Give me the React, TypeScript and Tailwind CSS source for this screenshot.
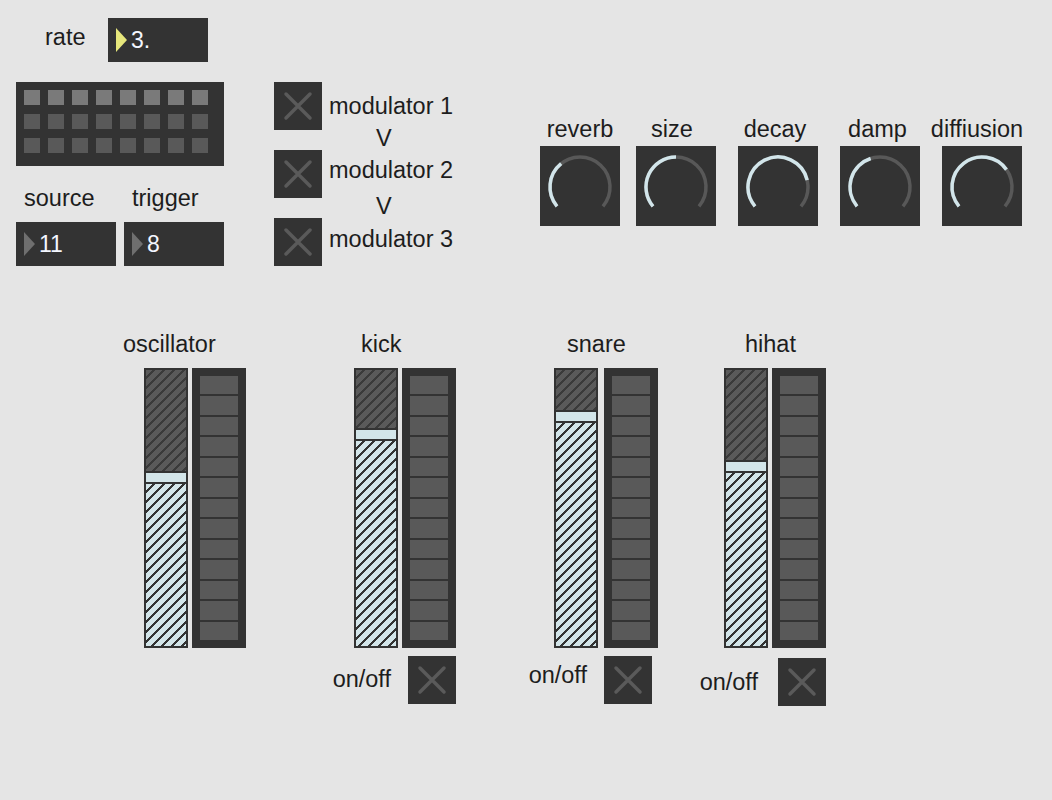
import React from "react";

const ARC_START = -130;
const ARC_END = 130;

const polar = (deg: number) => {
  const rad = (deg * Math.PI) / 180;
  return [40 + 30 * Math.sin(rad), 41 - 30 * Math.cos(rad)];
};

const arcPath = (from: number, to: number) => {
  const [x1, y1] = polar(from);
  const [x2, y2] = polar(to);
  const large = to - from > 180 ? 1 : 0;
  return `M ${x1} ${y1} A 30 30 0 ${large} 1 ${x2} ${y2}`;
};

type DialProps = { label: string; value: number; labelClass?: string; className?: string };

const Dial = ({ label, value, labelClass = "", className = "" }: DialProps) => {
  const angle = ARC_START + (ARC_END - ARC_START) * value;
  return (
    <div className={`flex flex-col items-center gap-[5px] w-[80px] ${className}`}>
      <div className={`whitespace-nowrap ${labelClass}`}>{label}</div>
      <div className="w-[80px] h-[80px] bg-[#333333]">
        <svg width="80" height="80" viewBox="0 0 80 80">
          <path d={arcPath(ARC_START, ARC_END)} fill="none" stroke="#585858" strokeWidth="3.5" />
          <path d={arcPath(ARC_START, angle)} fill="none" stroke="#d2e5ea" strokeWidth="3.5" />
        </svg>
      </div>
    </div>
  );
};

const Toggle = ({ className = "" }: { className?: string }) => (
  <div className={`w-[48px] h-[48px] shrink-0 bg-[#333333] ${className}`}>
    <svg width="48" height="48" viewBox="0 0 48 48">
      <path d="M12 12 L36 36 M36 12 L12 36" stroke="#5a5a5a" strokeWidth="3.5" strokeLinecap="round" />
    </svg>
  </div>
);

const NumberBox = ({ value, arrow }: { value: string; arrow: string }) => (
  <div className="w-[100px] h-[44px] bg-[#333333] flex items-center">
    <svg width="11" height="24" viewBox="0 0 11 24" className="ml-[8px]">
      <polygon points="0,0 11,12 0,24" fill={arrow} />
    </svg>
    <span className="ml-[4px] text-[23px] leading-none text-[#f4f7ff]">{value}</span>
  </div>
);

// hatched vertical slider, top = height of the dark part above the knob
const Slider = ({ top }: { top: string }) => (
  <div className="w-[44px] h-[280px] border-2 border-[#333333] flex flex-col">
    <div className={`${top} bg-[image:repeating-linear-gradient(135deg,#5a5a5a_0_4.6px,#3a3a3a_4.6px_7.07px)]`} />
    <div className="h-[13px] border-y-2 border-[#333333] bg-[#d3e5e9]" />
    <div className="flex-1 bg-[image:repeating-linear-gradient(135deg,#d3e5e9_0_4.6px,#333333_4.6px_7.07px)]" />
  </div>
);

const Meter = () => (
  <div className="w-[54px] h-[280px] bg-[#333333] p-[8px] flex flex-col gap-[2px]">
    {Array.from({ length: 13 }).map((_, i) => (
      <div key={i} className="flex-1 bg-[#595959]" />
    ))}
  </div>
);

type StripProps = {
  name: string;
  labelClass: string;
  top: string;
  gap: string;
  className: string;
  onOff?: { text: string; row: string };
};

const Strip = ({ name, labelClass, top, gap, className, onOff }: StripProps) => (
  <div className={`flex flex-col ${className}`}>
    <div className={`whitespace-nowrap ${labelClass}`}>{name}</div>
    <div className={`flex mt-[12px] ${gap}`}>
      <Slider top={top} />
      <Meter />
    </div>
    {onOff && (
      <div className={`flex items-start justify-end ${onOff.row}`}>
        <span className={`whitespace-nowrap ${onOff.text}`}>on/off</span>
        <Toggle />
      </div>
    )}
  </div>
);

export default function App() {
  return (
    <div className="relative w-[1052px] h-[800px] overflow-hidden bg-[#e5e5e5] text-[23.5px] leading-[23px] text-[#1d1d1d] font-['Liberation_Sans',Arial,sans-serif]">
      {/* transport: rate, step matrix, source / trigger */}
      <div className="absolute left-[16px] top-[18px] w-[208px] flex flex-col">
        <div className="flex w-[192px]">
          <span className="ml-[29px] mt-[8px]">rate</span>
          <div className="ml-auto">
            <NumberBox value="3." arrow="#e7e77c" />
          </div>
        </div>
        <div className="mt-[20px] h-[84px] bg-[#333333] pl-[8px] pt-[8px] grid grid-cols-[repeat(8,16px)] gap-x-[8px] gap-y-[9px] content-start">
          {Array.from({ length: 24 }).map((_, i) => (
            <div key={i} className={i < 8 ? "h-[15px] bg-[#7a7a7a]" : "h-[15px] bg-[#595959]"} />
          ))}
        </div>
        <div className="mt-[21px] grid grid-cols-2 gap-x-[8px]">
          <span className="pl-[8px]">source</span>
          <span className="pl-[8px]">trigger</span>
        </div>
        <div className="mt-[12px] grid grid-cols-2 gap-x-[8px]">
          <NumberBox value="11" arrow="#6f6f6f" />
          <NumberBox value="8" arrow="#6f6f6f" />
        </div>
      </div>

      {/* modulator chain */}
      <div className="absolute left-[274px] top-[82px] flex gap-[7px]">
        <div className="flex flex-col gap-[20px]">
          <Toggle />
          <Toggle />
          <Toggle />
        </div>
        <div className="flex flex-col pt-[13px] whitespace-nowrap">
          <span>modulator 1</span>
          <span className="mt-[9px] pl-[47px]">V</span>
          <span className="mt-[9px]">modulator 2</span>
          <span className="mt-[13px] pl-[47px]">V</span>
          <span className="mt-[10px]">modulator 3</span>
        </div>
      </div>

      {/* reverb */}
      <div className="absolute left-[540px] top-[118px] flex items-start gap-[22px]">
        <Dial label="reverb" value={0.35} className="-mr-[6px]" />
        <Dial label="size" value={0.5} labelClass="-ml-[8px]" />
        <Dial label="decay" value={0.795} labelClass="-ml-[6px]" />
        <Dial label="damp" value={0.43} labelClass="-ml-[5px]" />
        <Dial label="diffiusion" value={0.71} labelClass="-ml-[10px]" />
      </div>

      {/* mixer */}
      <div className="absolute left-[144px] top-[333px] flex items-start">
        <Strip name="oscillator" labelClass="-ml-[21px]" top="h-[101px]" gap="gap-[4px]" className="w-[102px]" />
        <Strip
          name="kick"
          labelClass="ml-[7px]"
          top="h-[58px]"
          gap="gap-[4px]"
          className="w-[102px] ml-[108px]"
          onOff={{ text: "mt-[12px]", row: "mt-[8px] gap-[17px]" }}
        />
        <Strip
          name="snare"
          labelClass="ml-[13px]"
          top="h-[40px]"
          gap="gap-[6px]"
          className="w-[104px] ml-[98px]"
          onOff={{ text: "mt-[8px]", row: "mt-[8px] mr-[6px] gap-[17px]" }}
        />
        <Strip
          name="hihat"
          labelClass="ml-[21px]"
          top="h-[90px]"
          gap="gap-[4px]"
          className="w-[102px] ml-[66px]"
          onOff={{ text: "mt-[13px]", row: "mt-[10px] gap-[20px]" }}
        />
      </div>
    </div>
  );
}
